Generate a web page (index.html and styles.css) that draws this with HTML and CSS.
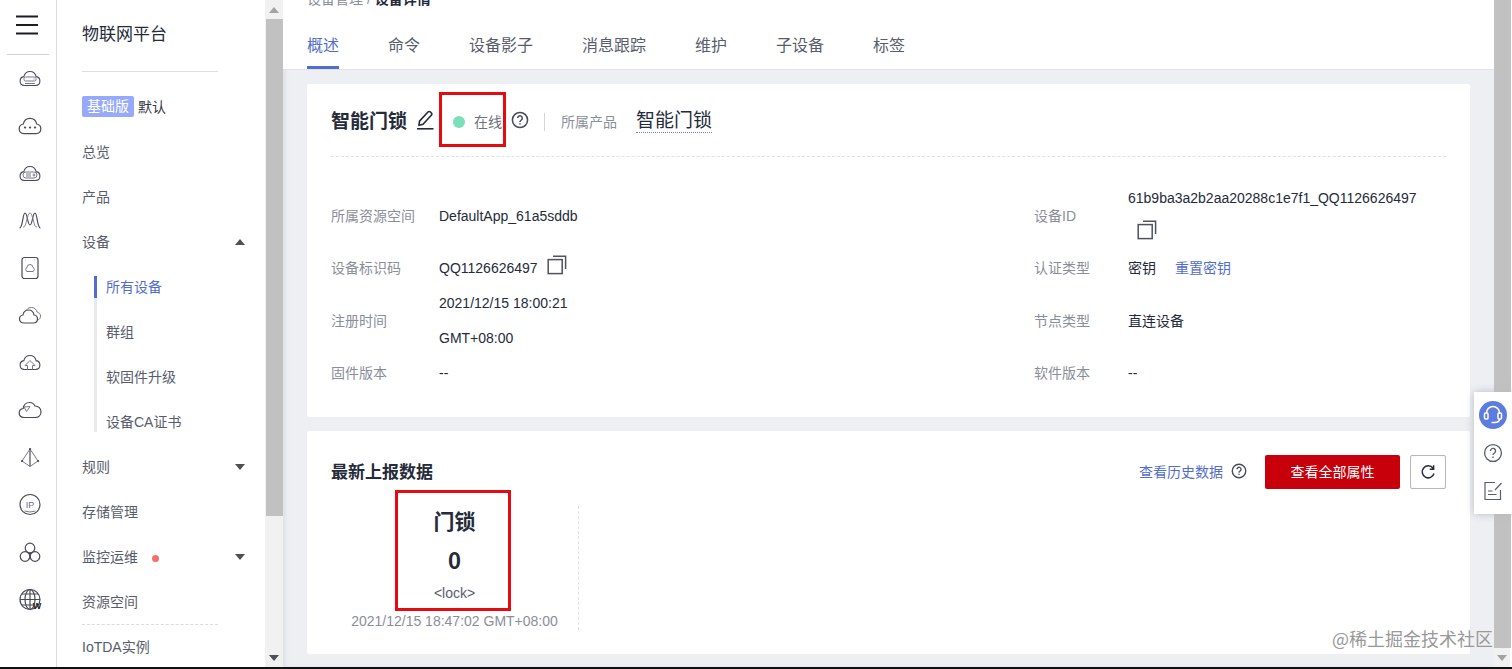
FILE: index.html
```html
<!DOCTYPE html>
<html lang="zh-CN">
<head>
<meta charset="utf-8">
<title>设备详情</title>
<link rel="stylesheet" href="styles.css">
</head>
<body>
<svg class="sprite" aria-hidden="true">
  <symbol id="help" viewBox="0 0 18 18"><circle cx="9" cy="9" r="7.6"/><path d="M6.7 7.1a2.3 2.3 0 1 1 3.6 1.9c-.9.6-1.3 1-1.3 1.9M9 12.2v1.4"/></symbol>
  <symbol id="copy" viewBox="0 0 20 20"><rect x="1.2" y="4.6" width="14" height="14"/><path d="M6 1.2h12.6V14"/></symbol>
  <symbol id="cloud" viewBox="0 0 24 18"><path d="M6 16.6C3 16.6 1.200 14.500 1.200 11.800C1.200 9.200 3 7.400 5.300 7C6 3.500 8.500 1.300 12 1.300S18 3.500 18.700 7c2.300.4 4.100 2.200 4.100 4.800 0 2.700-1.800 4.800-4.800 4.800z"/></symbol>
</svg>
<div class="app">
  <nav class="rail" aria-label="服务">
    <button class="rail-menu" aria-label="菜单"><svg width="22" height="20" viewBox="0 0 22 20"><path d="M0 1.500h22M0 10h22M0 18.500h22"/></svg></button>
    <div class="rail-list">
      <a href="#" aria-label="云服务器"><svg viewBox="0 0 24 24"><use href="#cloud" x="1" y="3" width="22" height="17"/><g class="thin"><rect x="6" y="10" width="12" height="4" rx="1.500"/><path d="M7 16.500h10M15.500 12h1"/></g></svg></a>
      <a href="#" aria-label="云应用"><svg viewBox="0 0 24 24"><use href="#cloud" x="0" y="3" width="24" height="18"/><path class="dots" d="M7 13.500h.1M12 13.500h.1M17 13.500h.1"/></svg></a>
      <a href="#" aria-label="裸金属"><svg viewBox="0 0 24 24"><use href="#cloud" x="1" y="3" width="22" height="17"/><g class="thin"><rect x="5" y="10" width="14" height="6" rx="3"/><path d="M8 12h5M8 14h5"/><circle cx="16" cy="13" r="1"/></g></svg></a>
      <a href="#" aria-label="弹性伸缩"><svg viewBox="0 0 24 24"><path d="M1.500 19C5 19 4.500 4 7 4s2.500 12 5 12 2.500-12 5-12 2 15 5.500 15"/><path class="thin" d="M5 17.500C8 21 9 4 12 4s4 17 7 13.500"/></svg></a>
      <a href="#" aria-label="云硬盘"><svg viewBox="0 0 24 24"><rect x="4" y="1.500" width="16" height="21" rx="2.500"/><path class="thin" d="M7 4h.5M16.500 4h.5M9 15.500a2.200 2.200 0 0 1 0-4 3 3 0 0 1 6 0 2.200 2.200 0 0 1 0 4z"/></svg></a>
      <a href="#" aria-label="云备份"><svg viewBox="0 0 24 24"><path d="M6 19c-3 0-4.500-2-4.500-4s1.300-3.700 3.500-4c.5-3 2.500-5 5.500-5s5 2 5.500 5c2.200.3 3.500 2 3.500 4s-1.500 4-4.500 4z"/><path class="thin" d="M9 5.500c1-1.500 2.600-2 4.500-2 3 0 5 2 5.500 4.500 2 .4 3.500 2 3.500 4s-1 3.500-2.500 4"/></svg></a>
      <a href="#" aria-label="对象存储"><svg viewBox="0 0 24 24"><use href="#cloud" x="1" y="3" width="22" height="17"/><path class="thin" d="M9.500 18.500v-4H7l5-5 5 5h-2.500v4"/></svg></a>
      <a href="#" aria-label="云网络"><svg viewBox="0 0 24 24"><path d="M6 18.500c-3 0-4.800-2-4.800-4.500S3 9.800 5.200 9.500C5.700 5.800 8 3.500 11.500 3.500c2.600 0 4.400 1.200 5.500 3.500 3.600 0 6 2.600 6 5.800s-2.300 5.700-5.500 5.700z"/><path class="thin" d="m6 8 6-.5-3.500 5z"/></svg></a>
      <a href="#" aria-label="负载均衡"><svg viewBox="0 0 24 24"><path d="M12 3v17.500"/><path class="thin" d="m12 3-8 12 8 5.500 8-5.500z"/><path class="dots" d="M12 3h.1M4 15h.1M20 15h.1"/></svg></a>
      <a href="#" aria-label="弹性公网IP"><svg viewBox="0 0 24 24"><circle cx="12" cy="11.500" r="10"/><text x="12" y="15" text-anchor="middle">IP</text><path class="thin" d="M6.500 18q5.500 2 11 0"/></svg></a>
      <a href="#" aria-label="数据库"><svg viewBox="0 0 24 24"><circle cx="12" cy="7" r="4.800"/><circle cx="7" cy="15.500" r="4.800"/><circle cx="17" cy="15.500" r="4.800"/><path class="dots" d="M12 12.500h.1"/></svg></a>
      <a href="#" aria-label="域名"><svg viewBox="0 0 24 24"><circle cx="12" cy="11.500" r="10"/><ellipse cx="12" cy="11.500" rx="5" ry="10"/><path d="M12 1.500v20M2 11.500h20M4 6h16M4 17h11"/><text class="w" x="19" y="21" text-anchor="middle">W</text></svg></a>
    </div>
  </nav>

  <aside class="side">
    <div class="side-body">
      <h2>物联网平台</h2>
      <nav class="menu" aria-label="物联网平台">
        <div class="row edition"><span class="badge">基础版</span>默认</div>
        <a class="row" href="#">总览</a>
        <a class="row" href="#">产品</a>
        <a class="row" href="#">设备<i class="caret up"></i></a>
        <div class="sub">
          <a class="row active" href="#">所有设备</a>
          <a class="row" href="#">群组</a>
          <a class="row" href="#">软固件升级</a>
          <a class="row" href="#">设备CA证书</a>
        </div>
        <a class="row" href="#">规则<i class="caret"></i></a>
        <a class="row" href="#">存储管理</a>
        <a class="row" href="#">监控运维<i class="news"></i><i class="caret"></i></a>
        <a class="row" href="#">资源空间</a>
        <a class="row last" href="#">IoTDA实例</a>
      </nav>
    </div>
    <div class="scroll"><i class="caret up"></i><div class="thumb"></div><i class="caret"></i></div>
  </aside>

  <main class="main">
    <header class="head">
      <div class="crumbs"><a href="#">设备管理</a> / <b>设备详情</b></div>
      <nav class="tabs" aria-label="设备详情">
        <a class="on" href="#">概述</a><a href="#">命令</a><a href="#">设备影子</a><a href="#">消息跟踪</a><a href="#">维护</a><a href="#">子设备</a><a href="#">标签</a>
      </nav>
    </header>
    <div class="cards">
      <section class="card device">
        <div class="device-head">
          <h1>智能门锁</h1>
          <button class="plain edit" aria-label="编辑"><svg width="18" height="20" viewBox="0 0 18 20"><path d="M1 18.800h16.500"/><path d="M3 15.200l.5-4L12 2a1.700 1.700 0 0 1 2.500 0l.8.8a1.700 1.700 0 0 1 0 2.500L7 14.300z"/></svg></button>
          <span class="status"><i class="dot"></i>在线<span class="mark"></span></span>
          <svg class="help" width="18" height="18"><use href="#help"/></svg>
          <i class="bar"></i>
          <span class="muted">所属产品</span>
          <a class="product" href="#">智能门锁</a>
        </div>
        <table class="info">
          <tr><th class="l1">所属资源空间</th><td>DefaultApp_61a5sddb</td><th class="l2">设备ID</th><td class="v2"><div class="wrap">61b9ba3a2b2aa20288c1e7f1_QQ1126626497 <button class="plain copy" aria-label="复制"><svg width="20" height="20"><use href="#copy"/></svg></button></div></td></tr>
          <tr><th>设备标识码</th><td>QQ1126626497<button class="plain copy" aria-label="复制"><svg width="20" height="20"><use href="#copy"/></svg></button></td><th>认证类型</th><td>密钥<a class="reset" href="#">重置密钥</a></td></tr>
          <tr><th>注册时间</th><td><div class="date">2021/12/15 18:00:21 GMT+08:00</div></td><th>节点类型</th><td>直连设备</td></tr>
          <tr><th>固件版本</th><td>--</td><th>软件版本</th><td>--</td></tr>
        </table>
      </section>

      <section class="card report">
        <div class="report-head">
          <h3>最新上报数据</h3>
          <a href="#">查看历史数据</a>
          <svg class="help" width="16" height="16"><use href="#help"/></svg>
          <button class="primary">查看全部属性</button>
          <button class="refresh" aria-label="刷新"><svg width="16" height="16" viewBox="0 0 16 16"><path d="M13 4.200A6 6 0 1 0 14 9.500M13.600 1.300v3.900H9.700"/></svg></button>
        </div>
        <div class="tile">
          <strong class="name">门锁</strong>
          <strong class="value">0</strong>
          <span class="key">&lt;lock&gt;</span>
          <span class="time">2021/12/15 18:47:02 GMT+08:00</span>
          <span class="mark"></span>
        </div>
      </section>
    </div>
  </main>
  <div class="scroll page"><div class="thumb"></div><i class="caret"></i></div>

  <div class="float">
    <button class="service" aria-label="客服"><svg width="20" height="20" viewBox="0 0 20 20"><path d="M3.500 8.500V8a6.500 6.500 0 0 1 13 0v.5M16.500 14c0 2.500-2 3.500-5 3.500"/><rect x="1.500" y="8" width="3.500" height="6" rx="1"/><rect x="15" y="8" width="3.500" height="6" rx="1"/><path d="M8.500 17.500h3.500"/></svg></button>
    <button class="plain" aria-label="帮助"><svg width="20" height="20"><use href="#help"/></svg></button>
    <button class="plain" aria-label="反馈"><svg width="20" height="20" viewBox="0 0 20 20"><path d="M12 1.500H2v17h15.500V9M18.500 2l-6.500 7M5 10h4.500M5 13.500h8.500"/></svg></button>
  </div>
  <div class="watermark">@稀土掘金技术社区</div>
</div>
</body>
</html>
```

FILE: styles.css
```css
* { box-sizing: border-box; }

body {
  margin: 0;
  font: 14px/20px "Liberation Sans", "Noto Sans CJK SC", sans-serif;
  color: #252b3a;
  overflow: hidden;
}

a { color: inherit; text-decoration: none; }
h1, h2, h3 { margin: 0; }
svg { display: block; fill: none; stroke: currentColor; stroke-width: 1.5; }
.sprite { position: absolute; width: 0; height: 0; }
button { font: inherit; color: inherit; padding: 0; cursor: pointer; }
.plain { border: 0; background: none; }

.app {
  position: relative;
  display: flex;
  height: 100vh;
  border-bottom: 2px solid #111;
  background: #fff;
}

/* icon rail */
.rail {
  display: flex;
  flex-direction: column;
  flex: none;
  width: 57px;
  padding: 0 7px 55px;
  border-right: 1px solid #dcdde0;
}
.rail-menu {
  height: 55px;
  padding: 0 9px 5px;
  border: 0;
  border-bottom: 1px solid #d0d1d4;
  background: none;
}
.rail-menu svg { stroke: #1c1c28; stroke-width: 2; }
.rail-list {
  display: flex;
  flex: 1;
  flex-direction: column;
  justify-content: space-between;
  align-items: center;
  padding: 12px 0 0 3px;
}
.rail-list svg { width: 24px; height: 24px; color: #494b59; stroke-width: 1.2; }
.rail-list .thin { stroke: #777987; stroke-width: 1; }
.rail-list .dots { stroke-width: 2.2; stroke-linecap: round; }
.rail-list text { font-size: 9px; fill: #666a88; stroke: none; }
.rail-list .w { font-size: 9px; font-weight: bold; fill: #222; }

/* side menu */
.side { display: flex; flex: none; width: 226px; }
.side-body { flex: 1; padding-left: 25px; overflow: hidden; }
.side h2 {
  width: 136px;
  height: 72px;
  padding-top: 23px;
  border-bottom: 1px solid #dcdee2;
  font-size: 17px;
  line-height: 24px;
  font-weight: 400;
}
.menu { width: 163px; padding-top: 12px; color: #575d6c; }
.row { display: flex; align-items: center; height: 45px; }
.edition { gap: 4px; color: #333745; }
.badge {
  height: 21px;
  padding: 0 5px;
  border-radius: 2px;
  background: #97a9fb;
  color: #fff;
}
.caret {
  margin-left: auto;
  border: 5px solid transparent;
  border-top: 6px solid #4d5058;
  border-bottom: 0;
}
.caret.up { border-top: 0; border-bottom: 6px solid #4d5058; }
.news { width: 7px; height: 7px; margin: 3px 0 0 14px; border-radius: 50%; background: #f66f6a; }
.sub { margin-left: 12px; position: relative; }
.sub .row { padding-left: 12px; }
.sub::before, .sub::after {
  content: "";
  position: absolute;
  left: 0;
  top: 12px;
  width: 3px;
  height: 22px;
  background: #526ecc;
}
.sub::before { height: auto; bottom: 12px; background: #e9eaed; }
.sub .active { color: #526ecc; }
.last { width: 136px; border-top: 1px dashed #d9dbe0; }

/* scroll bars */
.scroll {
  display: flex;
  flex: none;
  flex-direction: column;
  align-items: center;
  width: 18px;
  padding: 7px 0 6px;
  background: #f1f1f1;
}
.scroll .caret { margin: auto auto 0; }
.scroll .caret.up { margin: 0 auto 6px; border-bottom-color: #a3a3a3; }
.thumb { width: 17px; height: 76%; background: #c1c1c1; }
.scroll.page { width: 16px; margin-right: 2px; padding-top: 0; }
.page .thumb { height: 98%; }
.page .caret { border-top-color: #a3a3a3; }

/* main area */
.main { flex: 1; min-width: 0; background: #eeeff3; box-shadow: inset 3px 0 3px #e3e4e8; overflow: hidden; }
.head { margin-top: -11px; padding-left: 24px; border-bottom: 1px solid #e0e2e7; background: #fff; }
.crumbs { color: #8a8e99; }
.crumbs b { color: #252b3a; }
.tabs { display: flex; gap: 49px; padding-top: 14px; font-size: 16px; line-height: 46px; color: #575d6c; }
.tabs a { height: 46px; }
.tabs .on { color: #526ecc; border-bottom: 3px solid #526ecc; }
.cards { display: grid; gap: 14px; padding: 14px 24px; }
.card { padding: 0 24px; border-radius: 2px; background: #fff; }

.device { padding-bottom: 26px; }
.device-head {
  display: flex;
  align-items: center;
  height: 73px;
  margin-bottom: 24px;
  padding-top: 3px;
  border-bottom: 1px dashed #dfe1e6;
}
h1, .product { font-size: 19px; line-height: 22px; }
.edit { margin: 0 0 3px 9px; }
.edit svg { stroke-width: 1.6; }
.status { position: relative; display: flex; align-items: center; margin-left: 19px; color: #6d717c; }
.dot { width: 12px; height: 12px; margin-right: 9px; border-radius: 50%; background: #7adfbb; }
.help { color: #474b57; }
.device-head .help { margin: 0 0 3px 9px; }
.bar { width: 1px; height: 18px; margin: 0 16px 0 15px; background: #d3d5da; }
.muted { color: #8a8e99; }
.product { margin-left: 19px; border-bottom: 1px dotted #6f7fc8; }

.mark { position: absolute; border: 3px solid #e60b10; pointer-events: none; }
.status .mark { inset: -20px -4px -15px -14px; }

.info { width: 100%; border-collapse: collapse; line-height: 35px; }
.info th, .info td { padding: 0; text-align: left; font-weight: 400; }
.info th { color: #8a8e99; }
.l1 { width: 108px; }
.l2 { width: 94px; }
.v2 { width: 318px; }
.wrap { width: 300px; }
.date { width: 150px; }
.copy { margin: 0 0 8px 9px; color: #50535f; vertical-align: middle; }
.reset { margin-left: 19px; color: #526ecc; }

.report { padding-top: 24px; padding-bottom: 24px; }
.report-head { display: flex; align-items: center; height: 34px; }
.report h3 { flex: 1; padding-top: 2px; font-size: 17px; line-height: 24px; }
.report-head a { color: #526ecc; }
.report-head .help { margin: 0 18px 3px 8px; }
.primary { width: 135px; height: 34px; border: 0; border-radius: 2px; background: #c7000b; color: #fff; }
.refresh {
  display: grid;
  place-items: center;
  width: 36px;
  height: 34px;
  margin-left: 10px;
  border: 1px solid #b4b7be;
  border-radius: 2px;
  background: #fff;
}
.tile {
  position: relative;
  display: flex;
  flex-direction: column;
  align-items: center;
  width: 248px;
  height: 124px;
  margin-top: 17px;
  padding-top: 1px;
  border-right: 1px dashed #dfe1e6;
}
.name { font-size: 21px; line-height: 30px; }
.value { font: bold 22px/36px "Noto Sans CJK SC", sans-serif; margin: 4px 0; }
.key { color: #575d6c; line-height: 24px; }
.time { color: #8a8e99; line-height: 32px; }
.tile .mark { top: -16px; left: 64px; width: 116px; height: 121px; }

/* floating tools */
.float {
  position: absolute;
  right: 0;
  top: 392px;
  display: flex;
  flex-direction: column;
  align-items: center;
  gap: 18px;
  width: 38px;
  padding: 9px 0 13px;
  background: #fff;
  box-shadow: 0 0 8px #b9bbc2;
  color: #575d6c;
}
.float svg { stroke-width: 1.2; }
.service {
  display: grid;
  place-items: center;
  width: 28px;
  height: 28px;
  margin-bottom: -4px;
  border: 0;
  border-radius: 50%;
  background: #5e7ce0;
  color: #fff;
}
.float .service svg { stroke-width: 1.5; }

.watermark {
  position: absolute;
  right: 19px;
  bottom: 17px;
  font: 18px/24px "Noto Sans CJK SC", sans-serif;
  color: #999;
}
```
